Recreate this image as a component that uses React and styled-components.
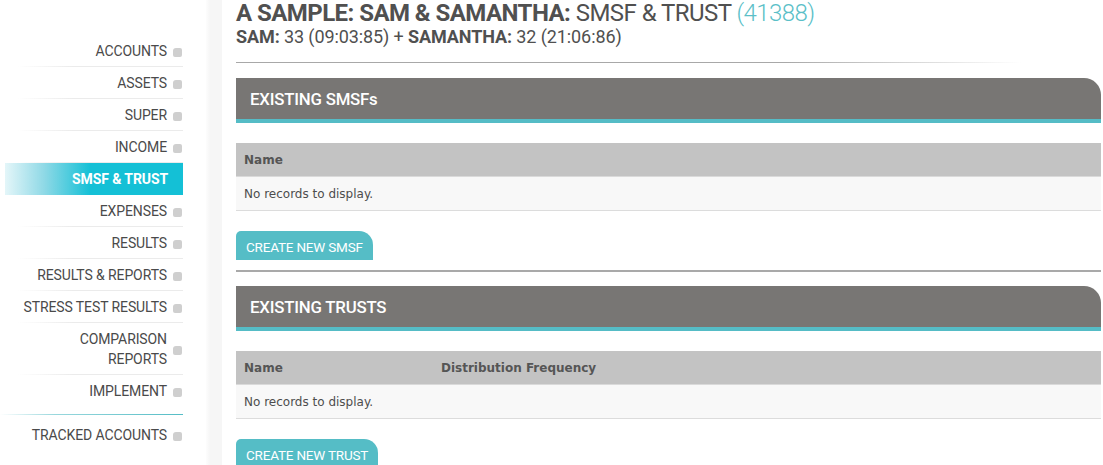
import React from 'react'
import styled, { createGlobalStyle } from 'styled-components'

const GlobalStyle = createGlobalStyle`
  body {
    margin: 0;
    background: #fff;
    font-family: Roboto, "Liberation Sans", sans-serif;
    color: #505050;
  }
`

const navItems = [
  { label: 'ACCOUNTS' },
  { label: 'ASSETS' },
  { label: 'SUPER' },
  { label: 'INCOME' },
  { label: 'SMSF & TRUST', active: true },
  { label: 'EXPENSES' },
  { label: 'RESULTS' },
  { label: 'RESULTS & REPORTS' },
  { label: 'STRESS TEST RESULTS' },
  { label: ['COMPARISON', 'REPORTS'], tall: true },
  { label: 'IMPLEMENT', last: true },
]

const sections = [
  { title: 'EXISTING SMSFs', columns: ['Name'], button: 'CREATE NEW SMSF' },
  { title: 'EXISTING TRUSTS', columns: ['Name', 'Distribution Frequency'], button: 'CREATE NEW TRUST' },
]

const NavLabel = ({ label }) =>
  Array.isArray(label)
    ? <span>{label[0]}<br />{label[1]}</span>
    : <span>{label}</span>

const App = () => {
  return <Page>
    <GlobalStyle />
    <Sidebar>
      <Nav>
        {navItems.map((item, index) => {
          return (
            <NavItem key={index} $active={item.active} $tall={item.tall} $last={item.last}>
              <NavLabel label={item.label} />
              {item.active ? null : <Bullet />}
            </NavItem>
          )
        })}
        <Divider />
        <NavItem $last>
          <span>TRACKED ACCOUNTS</span>
          <Bullet />
        </NavItem>
      </Nav>
    </Sidebar>
    <Gutter />
    <Main>
      <Title>
        <strong>A SAMPLE: SAM &amp; SAMANTHA:</strong> SMSF &amp; TRUST <Code>(41388)</Code>
      </Title>
      <Subtitle>
        <strong>SAM:</strong> 33 (09:03:85) + <strong>SAMANTHA:</strong> 32 (21:06:86)
      </Subtitle>
      <TopRule />
      {sections.map((s, index) => {
        return (
          <Section key={s.title}>
            <SectionHeader>{s.title}</SectionHeader>
            <Grid>
              <thead>
                <tr>
                  {s.columns.map((c) => <th key={c}>{c}</th>)}
                </tr>
              </thead>
              <tbody>
                <tr>
                  <td colSpan={s.columns.length}>No records to display.</td>
                </tr>
              </tbody>
            </Grid>
            <CreateButton type="button">{s.button}</CreateButton>
            {index < sections.length - 1 ? <SectionRule /> : null}
          </Section>
        )
      })}
    </Main>
  </Page>
}

const Page = styled.div`
  display: flex;
  min-height: 100vh;
`

const Sidebar = styled.aside`
  width: 206px;
  flex-shrink: 0;
  padding-top: 35px;
`

const Gutter = styled.div`
  width: 16px;
  flex-shrink: 0;
  background: linear-gradient(to right, #fdfdfd 0, #f6f6f6 4px, #f6f6f6 100%);
`

const Nav = styled.nav`
  width: 183px;
`

const NavItem = styled.div`
  display: flex;
  align-items: center;
  justify-content: flex-end;
  gap: 6px;
  box-sizing: border-box;
  height: ${({ $tall }) => ($tall ? '52px' : '32px')};
  margin-left: ${({ $active }) => ($active ? '5px' : '0')};
  padding-right: ${({ $active }) => ($active ? '15px' : '1px')};
  font-size: 14px;
  line-height: 20px;
  text-align: right;
  letter-spacing: -0.1px;
  color: ${({ $active }) => ($active ? '#fff' : '#4a4a4a')};
  font-weight: ${({ $active }) => ($active ? 700 : 400)};
  background: ${({ $active }) =>
    $active ? 'linear-gradient(to right, #e4f6f9 0, #8fd9e6 22%, #14c0d6 48%, #14c0d6 100%)' : 'transparent'};
  border-bottom: 1px solid transparent;
  border-image: ${({ $active, $last }) =>
    $active || $last ? 'none' : 'linear-gradient(to right, rgba(235,235,235,0) 10%, #ebebeb 40%) 1'};
`

const Bullet = styled.i`
  display: block;
  width: 9px;
  height: 9px;
  margin-top: 3px;
  border-radius: 3px 2px 2px 2px;
  background: #cfcfcf;
`

const Divider = styled.div`
  height: 1px;
  margin: 7px 0 4px;
  background: linear-gradient(to right, rgba(85, 189, 198, 0) 0, rgba(85, 189, 198, 0.6) 30%, #55bdc6 100%);
`

const Main = styled.main`
  flex: 1;
  padding: 0 2px 0 14px;
  min-width: 0;
`

const Title = styled.h1`
  margin: 0;
  font-size: 24px;
  line-height: 26px;
  font-weight: 400;
  letter-spacing: -0.55px;
  color: #505050;
  strong {
    font-weight: 700;
  }
`

const Code = styled.span`
  color: #5bbfc8;
  font-weight: 300;
`

const Subtitle = styled.div`
  margin-top: 1px;
  font-size: 18px;
  line-height: 20px;
  letter-spacing: -0.1px;
  color: #505050;
  strong {
    font-weight: 700;
  }
`

const TopRule = styled.div`
  height: 1px;
  margin: 15px 80px 15px 0;
  background: linear-gradient(to right, #a8a8a8 0, #a8a8a8 70%, rgba(168, 168, 168, 0) 100%);
`

const Section = styled.section`
  display: flex;
  flex-direction: column;
  align-items: flex-start;
`

const SectionHeader = styled.h2`
  align-self: stretch;
  margin: 0;
  height: 41px;
  padding-left: 14px;
  display: flex;
  align-items: center;
  background: #787674;
  border-bottom: 4px solid #55bcc6;
  border-top-right-radius: 17px;
  color: #fff;
  font-size: 16.8px;
  font-weight: 500;
  letter-spacing: -0.2px;
`

const Grid = styled.table`
  align-self: stretch;
  margin-top: 20px;
  border-collapse: collapse;
  font-family: "DejaVu Sans", Verdana, sans-serif;
  font-size: 12px;
  color: #4d4d4d;
  th {
    height: 33px;
    padding: 0 8px;
    text-align: left;
    background: #c3c3c3;
    font-weight: 700;
    color: #555;
    border-bottom: 1px solid #dadada;
  }
  th:first-child {
    width: 181px;
  }
  td {
    height: 33px;
    padding: 0 8px;
    background: #f8f8f8;
    border-bottom: 1px solid #dcdcdc;
  }
`

const CreateButton = styled.button`
  margin-top: 20px;
  height: 29px;
  padding: 2px 10px 0;
  border: none;
  border-radius: 5px 14px 0 0;
  background: #55bdc6;
  color: #fff;
  font-family: Roboto, "Liberation Sans", sans-serif;
  font-size: 13.5px;
  letter-spacing: -0.2px;
  cursor: pointer;
`

const SectionRule = styled.div`
  align-self: stretch;
  height: 2px;
  margin: 10px 0 14px;
  background: #a9a9a9;
`

export default App
